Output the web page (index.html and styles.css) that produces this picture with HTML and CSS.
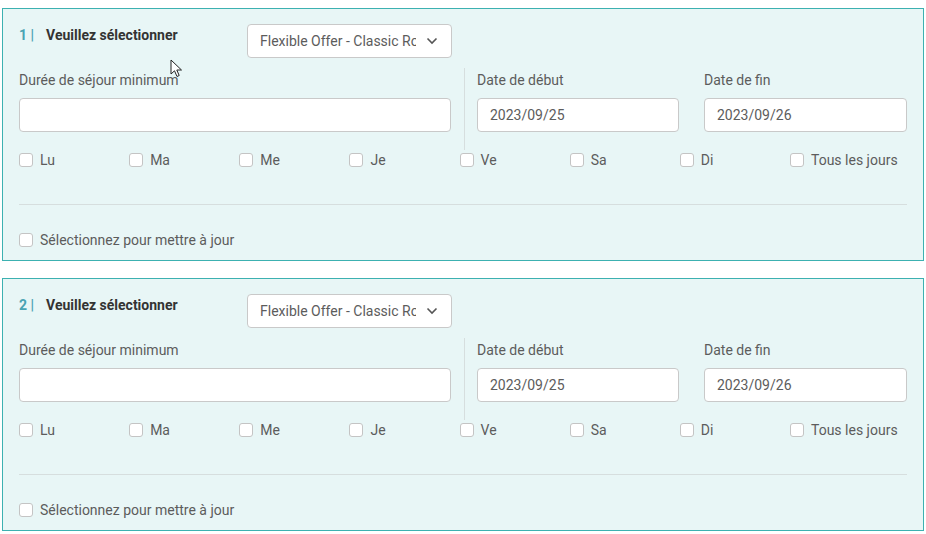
FILE: index.html
```html
<!DOCTYPE html>
<html>
<head>
    <title>Offres</title>
    <link rel="stylesheet" href="styles.css">
</head>
<body>
    <!-- Bloc 1 -->
    <div class="card">
        <div class="card-head">
            <div class="step"><span class="num">1 |</span><span class="title">Veuillez sélectionner</span></div>
            <div class="select">
                <span class="select-text">Flexible Offer - Classic Room</span>
                <svg class="chev" width="12" height="8" viewBox="0 0 12 8"><path d="M1.5 1.5 L6 6 L10.5 1.5" fill="none" stroke="#555" stroke-width="1.6"/></svg>
            </div>
        </div>
        <div class="fields">
            <div class="field wide"><label>Durée de séjour minimum</label><div class="input"></div></div>
            <div class="vsep"></div>
            <div class="field"><label>Date de début</label><div class="input">2023/09/25</div></div>
            <div class="field end"><label>Date de fin</label><div class="input">2023/09/26</div></div>
        </div>
        <div class="days">
            <label class="check"><span class="box"></span>Lu</label>
            <label class="check"><span class="box"></span>Ma</label>
            <label class="check"><span class="box"></span>Me</label>
            <label class="check"><span class="box"></span>Je</label>
            <label class="check"><span class="box"></span>Ve</label>
            <label class="check"><span class="box"></span>Sa</label>
            <label class="check"><span class="box"></span>Di</label>
            <label class="check"><span class="box"></span>Tous les jours</label>
        </div>
        <div class="sep"></div>
        <label class="check update"><span class="box"></span>Sélectionnez pour mettre à jour</label>

        <!-- mouse pointer from the capture -->
        <svg class="cursor" width="14" height="20" viewBox="0 0 14 20"><path d="M1 1 L1 15 L4.5 11.8 L7 17.5 L9.2 16.5 L6.8 11 L11.5 11 Z" fill="#fff" stroke="#222" stroke-width="1"/></svg>
    </div>

    <!-- Bloc 2 -->
    <div class="card">
        <div class="card-head">
            <div class="step"><span class="num">2 |</span><span class="title">Veuillez sélectionner</span></div>
            <div class="select">
                <span class="select-text">Flexible Offer - Classic Room</span>
                <svg class="chev" width="12" height="8" viewBox="0 0 12 8"><path d="M1.5 1.5 L6 6 L10.5 1.5" fill="none" stroke="#555" stroke-width="1.6"/></svg>
            </div>
        </div>
        <div class="fields">
            <div class="field wide"><label>Durée de séjour minimum</label><div class="input"></div></div>
            <div class="vsep"></div>
            <div class="field"><label>Date de début</label><div class="input">2023/09/25</div></div>
            <div class="field end"><label>Date de fin</label><div class="input">2023/09/26</div></div>
        </div>
        <div class="days">
            <label class="check"><span class="box"></span>Lu</label>
            <label class="check"><span class="box"></span>Ma</label>
            <label class="check"><span class="box"></span>Me</label>
            <label class="check"><span class="box"></span>Je</label>
            <label class="check"><span class="box"></span>Ve</label>
            <label class="check"><span class="box"></span>Sa</label>
            <label class="check"><span class="box"></span>Di</label>
            <label class="check"><span class="box"></span>Tous les jours</label>
        </div>
        <div class="sep"></div>
        <label class="check update"><span class="box"></span>Sélectionnez pour mettre à jour</label>
    </div>
</body>
</html>
```

FILE: styles.css
```css
body {
    margin: 8px 2px 0 2px;
    font-family: Roboto, "Liberation Sans", sans-serif;
    font-size: 14px;
    color: #5c5c5c;
    background: #fff;
}

/* Card */
.card {
    position: relative;
    width: 888px;
    border: 1px solid #3cb1b1;
    background: #e8f6f6;
    padding: 15px 16px 10px 16px;
    margin-bottom: 17px;
}

.card-head {
    display: flex;
    align-items: flex-start;
    height: 34px;
}
.step {
    width: 228px;
    padding-top: 1px;
    line-height: 20px;
    font-weight: bold;
}
.step .num {
    color: #4aa3b3;
    margin-right: 12px;
}
.step .title {
    color: #333;
}

/* Select */
.select {
    width: 178px;
    height: 32px;
    padding: 0 13px 0 12px;
    border: 1px solid #c9c9c9;
    border-radius: 4px;
    background: #fff;
    display: flex;
    align-items: center;
    justify-content: space-between;
}
.select-text {
    width: 156px;
    overflow: hidden;
    white-space: nowrap;
}
.chev {
    flex: none;
}

/* Fields */
.fields {
    display: flex;
    margin-top: 10px;
    height: 82px;
}
.field {
    width: 202px;
    padding-top: 3px;
}
.field.wide {
    width: 432px;
}
.field.end {
    width: 203px;
    margin-left: 25px;
}
.field label {
    display: block;
    line-height: 18px;
    margin-bottom: 9px;
}
.input {
    height: 32px;
    line-height: 33px;
    padding: 0 12px;
    border: 1px solid #c9c9c9;
    border-radius: 4px;
    background: #fff;
}
.vsep {
    width: 1px;
    background: #d6dede;
    margin: 0 12px 0 13px;
}

/* Checkboxes */
.days {
    display: grid;
    grid-template-columns: repeat(8, 110.15px);
}
.check {
    display: flex;
    align-items: center;
    line-height: 20px;
    height: 20px;
}
.box {
    width: 12px;
    height: 12px;
    border: 1px solid #c4c4c4;
    border-radius: 3px;
    background: #fff;
    margin-right: 7px;
}

.sep {
    height: 1px;
    background: #d6dede;
    margin: 34px 0 25px 0;
}

.cursor {
    position: absolute;
    left: 167px;
    top: 50px;
}
```
